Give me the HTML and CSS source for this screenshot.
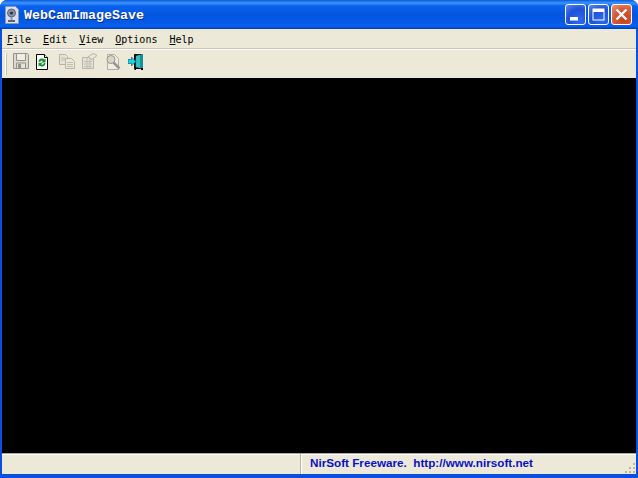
FILE: index.html
```html
<!DOCTYPE html>
<html lang="en">
<head>
<meta charset="utf-8">
<title>WebCamImageSave</title>
<link rel="stylesheet" href="styles.css">
</head>
<body>
<div class="window">
  <header class="titlebar">
    <svg class="appicon" width="16" height="18" viewBox="0 0 16 18">
      <path d="M1.5 .5h10l3 3v14h-13z" fill="#d8e0f0" stroke="#8d98b0"/>
      <circle cx="7.5" cy="7" r="4" fill="#8a93a8" stroke="#5a6478"/>
      <circle cx="7.5" cy="7" r="1.6" fill="#26324e"/>
      <path d="M4 14h7v2H4z" fill="#5a6478"/>
      <path d="M6.500 11h2v3h-2z" fill="#8a93a8"/>
    </svg>
    <span class="title">WebCamImageSave</span>
    <div class="caption-buttons">
      <button class="capbtn"><svg width="21" height="21" viewBox="0 0 21 21"><rect x="5" y="13" width="8" height="3.500" fill="#fff"/></svg></button>
      <button class="capbtn"><svg width="21" height="21" viewBox="0 0 21 21"><rect x="5" y="5" width="11" height="11" fill="none" stroke="#fff" stroke-width="1"/><rect x="5" y="5" width="11" height="3" fill="#fff"/></svg></button>
      <button class="capbtn close"><svg width="21" height="21" viewBox="0 0 21 21"><path d="M5.500 5.500l10 10M15.500 5.500l-10 10" stroke="#fff" stroke-width="2.400" fill="none"/></svg></button>
    </div>
  </header>
  <div class="client">
    <nav class="menubar">
      <span class="menu"><u>F</u>ile</span>
      <span class="menu"><u>E</u>dit</span>
      <span class="menu"><u>V</u>iew</span>
      <span class="menu"><u>O</u>ptions</span>
      <span class="menu"><u>H</u>elp</span>
    </nav>
    <div class="toolbar">
      <span class="grip"></span>
      <svg class="tool" width="16" height="16" viewBox="0 0 16 16"><path d="M.5.5h14l1 1v14H.5z" fill="#dcdacd" stroke="#93928a"/><path d="M3.500 1v6.500h9V1" fill="#f0eee2" stroke="#93928a"/><path d="M3.500 15v-5h9v5" fill="#e6e4d8" stroke="#93928a"/><rect x="5" y="11" width="3" height="4" fill="#93928a"/></svg>
      <svg class="tool" width="16" height="18" viewBox="2 0 16 18"><path d="M2.500 1.500h8l3 3v12h-11z" fill="#fff" stroke="#000"/><path d="M10.500 1.500v3h3" fill="#dfe" stroke="#000"/><path d="M4.500 8.500a3.500 3.500 0 0 1 6-2l1-1V9.500H7.500l1.500-1.500A2 2 0 0 0 6 9zM11.500 10a3.500 3.500 0 0 1-6 2.500l-1 1V9.800h4l-1.500 1.500A2 2 0 0 0 10 10z" fill="#12902a"/></svg>
      <svg class="tool dim" width="16" height="16" viewBox="0 0 16 16"><path d="M.5 1.500h6l2 2v8H.5z" fill="#e6e4d8" stroke="#b5b4a8"/><path d="M6.500 5.500h6l3 3v7h-9z" fill="#ece9d8" stroke="#b5b4a8"/><path d="M8 9.500h6M8 11.500h6M8 13.500h6M2 5h4M2 7h4" stroke="#c0bfb3"/></svg>
      <svg class="tool dim" width="16" height="16" viewBox="0 0 16 16"><path d="M.5 4.500h11v11H.5z" fill="#e6e4d8" stroke="#b5b4a8"/><path d="M2 8.500h8M2 11h8M2 13.500h8M5 5V15M8 5V15" stroke="#c0bfb3"/><path d="M6 4l5-3.500 4 2-5 4z" fill="#ece9d8" stroke="#b5b4a8"/></svg>
      <svg class="tool dim" width="16" height="18" viewBox="0 0 16 18"><path d="M2.500 1.500h7l4 4v11h-11z" fill="#f0eee2" stroke="#b0afa4"/><circle cx="6" cy="6.500" r="4" fill="#d8d6ca" stroke="#98978c"/><path d="M8.500 9.500l6 6" stroke="#98978c" stroke-width="2.500"/></svg>
      <svg class="tool" width="16" height="18" viewBox="0 0 16 18"><path d="M6.500 1.500h8v14h-8z" fill="#0b2b2b" stroke="#000"/><path d="M8 3l7-2v15l-7-2z" fill="#2fc0c4"/><path d="M12 2.200l3-1.200v15l-3-1.200z" fill="#1a8f98"/><path d="M6.500 14v3h1.500v-3zM13 15v2h2v-2z" fill="#000"/><path d="M0 6.500h3.500V4l4.500 4.500L3.500 13v-2.500H0z" fill="#10d8e8" stroke="#06303a" stroke-width=".5"/></svg>
    </div>
    <main class="view"></main>
    <footer class="statusbar">
      <div class="pane first"></div>
      <div class="pane credit">NirSoft Freeware.&nbsp; http://www.nirsoft.net</div>
      <svg class="sizegrip" width="12" height="12" viewBox="0 0 12 12"><path d="M9 1h2v2H9zM5 5h2v2H5zM9 5h2v2H9zM1 9h2v2H1zM5 9h2v2H5zM9 9h2v2H9z" fill="#b8b6a8"/></svg>
    </footer>
  </div>
</div>
</body>
</html>
```
FILE: styles.css
```css
html, body {
  margin: 0;
  padding: 0;
  height: 100%;
  overflow: hidden;
}

.window {
  box-sizing: border-box;
  width: 638px;
  height: 478px;
  display: flex;
  flex-direction: column;
  background: #0a4fe0;
  border-radius: 7px 7px 0 0;
  overflow: hidden;
}

.titlebar {
  flex: 0 0 29px;
  display: flex;
  align-items: center;
  box-sizing: border-box;
  padding: 0 2px 0 4px;
  background: linear-gradient(#0a5bd8 0, #3d95ff 3px, #0a62ec 6px, #0456e0 14px, #0459e6 22px, #0a62ee 26px, #003cc0 29px);
}

.appicon {
  flex: none;
  margin-right: 4px;
}

.title {
  font: bold 13.34px "Liberation Mono", monospace;
  color: #fff;
  text-shadow: 1px 1px 0 #0a2f90;
  position: relative;
  top: 1px;
}

.caption-buttons {
  margin-left: auto;
  display: flex;
  gap: 2px;
  padding-right: 4px;
}

.capbtn {
  width: 21px;
  height: 21px;
  padding: 0;
  display: block;
  box-sizing: border-box;
  border: 1px solid #fff;
  border-radius: 3px;
  background: radial-gradient(circle at 70% 80%, #2f6bf0 0, #1f50d8 55%, #5d8cf0 100%);
  overflow: hidden;
}

.capbtn svg {
  display: block;
  margin: -1px;
}

.capbtn.close {
  background: radial-gradient(circle at 65% 75%, #c8401c 0, #d85a35 55%, #eb9a80 100%);
}

.client {
  flex: 1;
  min-height: 0;
  margin: 0 2px 4px 2px;
  display: flex;
  flex-direction: column;
  background: #ece9d8;
}

.menubar {
  flex: 0 0 20px;
  box-sizing: border-box;
  display: flex;
  align-items: center;
  padding: 1px 0 0 5px;
  gap: 12px;
  background: #ece9d8;
  border-bottom: 1px solid #c8c5b6;
  font: 10px "DejaVu Sans Mono", monospace;
  color: #000;
}

.toolbar {
  flex: 0 0 29px;
  box-sizing: border-box;
  display: flex;
  align-items: flex-start;
  padding: 3px 0 0 3px;
  gap: 7px;
  border-top: 1px solid #fff;
  background: #ece9d8;
}

.grip {
  width: 2px;
  height: 22px;
  margin-right: -1px;
  border-left: 1px solid #fff;
  border-right: 1px solid #c8c5b6;
  box-sizing: border-box;
}

.tool {
  flex: none;
  display: block;
}

.view {
  flex: 1;
  background: #000;
  min-height: 0;
}

.statusbar {
  flex: 0 0 21px;
  display: flex;
  align-items: stretch;
  box-sizing: border-box;
  border-top: 1px solid #aca899;
  box-shadow: inset 0 1px 0 #fff;
  background: #ece9d8;
  position: relative;
}

.pane {
  box-sizing: border-box;
}

.pane.first {
  width: 299px;
  border-right: 1px solid #b8b5a6;
}

.pane.credit {
  flex: 1;
  border-left: 1px solid #fff;
  padding: 0 0 4px 8px;
  display: flex;
  align-items: center;
  font: bold 11.7px "Liberation Sans", Arial, sans-serif;
  color: #0a10c8;
}

.sizegrip {
  position: absolute;
  right: 0;
  bottom: 0;
}
```
